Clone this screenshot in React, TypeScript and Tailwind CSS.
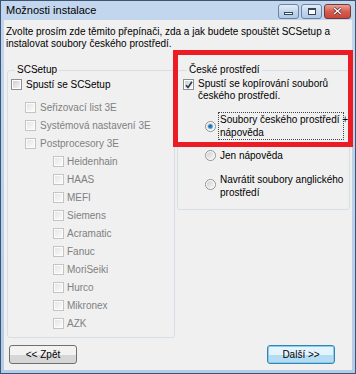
import React from 'react'

const scItems = ['Seřizovací list 3E', 'Systémová nastavení 3E', 'Postprocesory 3E']
const postItems = ['Heidenhain', 'HAAS', 'MEFI', 'Siemens', 'Acramatic', 'Fanuc', 'MoriSeiki', 'Hurco', 'Mikronex', 'AZK']

function CheckBox({ checked = false, disabled = false }: { checked?: boolean; disabled?: boolean }) {
  return (
    <span
      className={`relative flex h-[11px] w-[11px] shrink-0 items-center justify-center border p-px ${
        disabled ? 'border-[#c4c4c4] bg-[#fcfcfc]' : 'border-[#8e8f8f] bg-white'
      }`}
    >
      <span
        className={`h-full w-full ${
          disabled ? 'bg-gradient-to-br from-[#e6e6e6] to-[#fafafa]' : 'bg-gradient-to-br from-[#cfcfcf] to-[#f6f6f6]'
        }`}
      />
      {checked && (
        <svg className="absolute left-[1px] top-[1px] h-[8px] w-[8px]" viewBox="0 0 8 8">
          <path d="M1 4.2 L3 6.4 L7 0.8" fill="none" stroke="#2a3b5a" strokeWidth="1.6" />
        </svg>
      )}
    </span>
  )
}

function Radio({ selected = false }: { selected?: boolean }) {
  return (
    <svg className="h-[11px] w-[11px] shrink-0" viewBox="0 0 11 11">
      <defs>
        <linearGradient id="rg" x1="0" y1="0" x2="1" y2="1">
          <stop offset="0" stopColor="#cfcfcf" />
          <stop offset="1" stopColor="#f8f8f8" />
        </linearGradient>
        <radialGradient id="rs" cx="0.45" cy="0.45" r="0.6">
          <stop offset="0" stopColor="#1d4f86" />
          <stop offset="0.55" stopColor="#3f8ccb" />
          <stop offset="1" stopColor="#9fd3f2" />
        </radialGradient>
      </defs>
      <circle cx="5.5" cy="5.5" r="5" fill="white" stroke="#8e8f8f" />
      <circle cx="5.5" cy="5.5" r="3.6" fill="url(#rg)" />
      {selected && <circle cx="5.5" cy="5.5" r="2.6" fill="url(#rs)" />}
    </svg>
  )
}

function TitleButton({ kind }: { kind: 'min' | 'max' | 'close' }) {
  if (kind === 'close') {
    return (
      <div className="flex h-[15px] w-[27px] items-center justify-center rounded-[3px] border border-[#6e3a3a] bg-gradient-to-b from-[#e8a196] via-[#d45d4f] to-[#c8463a]">
        <svg className="h-[8px] w-[9px]" viewBox="0 0 9 8">
          <path d="M1 1 L8 7 M8 1 L1 7" stroke="#4a1d1d" strokeWidth="2.6" />
          <path d="M1 1 L8 7 M8 1 L1 7" stroke="white" strokeWidth="1.5" />
        </svg>
      </div>
    )
  }
  return (
    <div className="flex h-[15px] w-[21px] items-center justify-center rounded-[3px] border border-[#6a84a6] bg-gradient-to-b from-[#e6eef8] via-[#c5d6ec] to-[#b0c7e4]">
      {kind === 'min' ? (
        <span className="mt-[5px] h-[3px] w-[9px] border border-[#34465f] bg-white" />
      ) : (
        <span className="h-[7px] w-[8px] border border-[#34465f] border-t-2 bg-white" />
      )}
    </div>
  )
}

export default function App() {
  return (
    <div className="relative flex h-[374px] w-[356px] flex-col border border-[#3d5573] bg-gradient-to-b from-[#c2d7ee] to-[#b4cce8] font-['Liberation_Sans',Arial,sans-serif] text-[10px] text-black">
      {/* title bar */}
      <div className="flex h-[19px] shrink-0 items-center justify-between pl-[5px] pr-[4px]">
        <span className="text-[11px] leading-none">Možnosti instalace</span>
        <div className="flex items-center gap-[2px] pt-[1px]">
          <TitleButton kind="min" />
          <TitleButton kind="max" />
          <TitleButton kind="close" />
        </div>
      </div>

      {/* client area */}
      <div className="mx-[3px] mb-[3px] flex flex-1 flex-col bg-[#f0f0f0]">
        <p className="px-[2px] pt-[6px] leading-[12px]">
          Zvolte prosím zde těmito přepínači, zda a jak budete spouštět SCSetup a
          <br />
          instalovat soubory českého prostředí.
        </p>

        <div className="mt-[14px] flex items-start gap-[2px] pl-[3px]">
          {/* SCSetup group */}
          <fieldset className="h-[274px] w-[168px] rounded-[3px] border border-[#d5dfe5] pb-[5px] pl-[3px]">
            <legend className="ml-[4px] px-[2px] leading-[12px]">SCSetup</legend>
            <div className="flex h-[16px] items-center gap-[4px]">
              <CheckBox />
              <span>Spustí se SCSetup</span>
            </div>
            <div className="mt-[6px] flex flex-col">
              {scItems.map((item) => (
                <div key={item} className="flex h-[18px] items-center gap-[4px] pl-[14px] text-[#808080]">
                  <CheckBox disabled />
                  <span>{item}</span>
                </div>
              ))}
              {postItems.map((item) => (
                <div key={item} className="flex h-[18px] items-center gap-[3px] pl-[42px] text-[#808080]">
                  <CheckBox disabled />
                  <span>{item}</span>
                </div>
              ))}
            </div>
          </fieldset>

          {/* Czech environment group */}
          <fieldset className="h-[146px] w-[173px] rounded-[3px] border border-[#d5dfe5] pl-[5px]">
            <legend className="ml-[4px] px-[2px] leading-[12px]">České prostředí</legend>
            <div className="mt-[2px] flex items-start gap-[4px]">
              <span className="mt-[1px]">
                <CheckBox checked />
              </span>
              <span className="leading-[12px]">
                Spustí se kopírování souborů
                <br />
                českého prostředí.
              </span>
            </div>
            <div className="mt-[10px] flex items-center gap-[2px] pl-[22px]">
              <Radio selected />
              <span className="w-[126px] whitespace-nowrap border border-dotted border-[#444] px-[1px] leading-[13px]">
                Soubory českého prostředí +
                <br />
                nápověda
              </span>
            </div>
            <div className="mt-[9px] flex items-center gap-[3px] pl-[22px] leading-[13px]">
              <Radio />
              <span className="pl-[1px]">Jen nápověda</span>
            </div>
            <div className="mt-[11px] flex items-start gap-[3px] pl-[22px] leading-[13px]">
              <span className="mt-[6px]">
                <Radio />
              </span>
              <span className="whitespace-nowrap pl-[1px]">
                Navrátit soubory anglického
                <br />
                prostředí
              </span>
            </div>
          </fieldset>
        </div>

        <div className="mt-[7px] flex items-center justify-between pl-[5px] pr-[17px]">
          <button className="h-[19px] w-[68px] rounded-[3px] border border-[#707070] bg-gradient-to-b from-[#f2f2f2] from-50% to-[#d6d6d6] to-50% leading-none">
            &lt;&lt; Zpět
          </button>
          <button className="h-[19px] w-[68px] rounded-[3px] border border-[#3c7fb1] bg-gradient-to-b from-[#e5f4fc] from-50% to-[#b4ddf4] to-50% leading-none shadow-[inset_0_0_0_1px_#7fd0f5]">
            Další &gt;&gt;
          </button>
        </div>
      </div>

      {/* red annotation frame */}
      <div className="pointer-events-none absolute left-[172px] top-[49px] h-[97px] w-[180px] border-[5px] border-[#ed1c24]" />
    </div>
  )
}
